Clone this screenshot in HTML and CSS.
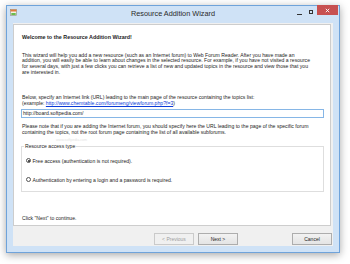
FILE: index.html
```html
<!DOCTYPE html>
<html>
<head>
<meta charset="utf-8">
<link rel="stylesheet" href="styles.css">
</head>
<body>
<div class="window">
  <div class="titlebar">
    <div class="tb-left">
      <svg class="app-icon" width="7" height="7" viewBox="0 0 7 7">
        <rect x="0.5" y="0.5" width="6" height="6" fill="#f4f1e6" stroke="#8a8a7a" stroke-width="0.6"/>
        <rect x="0.5" y="0.5" width="6" height="2" fill="#e07b3c"/>
        <rect x="1.3" y="4" width="4.4" height="2" fill="#6dbb4a"/>
      </svg>
    </div>
    <div class="title">Resource Addition Wizard</div>
    <div class="controls">
      <span class="ctl min"></span>
      <span class="ctl max"></span>
      <span class="ctl close">
        <svg width="5" height="5" viewBox="0 0 5 5"><path d="M0.8 0.8 L4.2 4.2 M4.2 0.8 L0.8 4.2" stroke="#fff" stroke-width="0.9"/></svg>
      </span>
    </div>
  </div>
  <div class="client">
    <div class="panel">
      <div class="welcome">Welcome to the Resource Addition Wizard!</div>
      <p class="para p1">This wizard will help you add a new resource (such as an Internet forum) to Web Forum Reader.  After you have made an<br>addition, you will easily be able to learn about changes in the selected resource. For example, if you have not visited a resource<br>for several days, with just a few clicks you can retrieve a list of new and updated topics in the resource and view those that you<br>are interested in.</p>
      <p class="para p2">Below, specify an Internet link (URL) leading to the main page of the resource containing the topics list:<br>(example: <a class="link" href="#">http://www.chemtable.com/forumeng/viewforum.php?f=3</a>)</p>
      <div class="input">http://board.softpedia.com/</div>
      <p class="para p3">Please note that if you are adding the Internet forum, you should specify here the URL leading to the page of the specific forum<br>containing the topics, not the root forum page containing the list of all available subforums.</p>
      <fieldset class="group">
        <legend class="legend">Resource access type</legend>
        <div class="radio-row r1"><span class="radio checked"></span>Free access (authentication is not required).</div>
        <div class="radio-row r2"><span class="radio"></span>Authentication by entering a login and a password is required.</div>
      </fieldset>
      <div class="hint">Click "Next" to continue.</div>
      <div class="watermark">www.softpedia.com</div>
    </div>
    <div class="buttons">
      <div class="btn disabled">&lt; Previous</div>
      <div class="btn">Next &gt;</div>
      <div class="btn cancel">Cancel</div>
    </div>
  </div>
</div>
</body>
</html>
```
FILE: styles.css
```css
html, body {
  margin: 0;
  padding: 0;
  background: #ffffff;
}
body {
  width: 350px;
  height: 264px;
  overflow: hidden;
  font-family: "Liberation Sans", Arial, sans-serif;
  color: #1c1c1c;
}
.window {
  margin: 5px 0 0 6px;
  width: 334px;
  height: 248px;
  box-sizing: border-box;
  border: 1px solid #6fa3da;
  background: #cfe2f6;
  box-shadow: 0 2px 8px rgba(0, 0, 0, 0.35);
  display: flex;
  flex-direction: column;
}
.titlebar {
  height: 17px;
  display: grid;
  grid-template-columns: 1fr auto 1fr;
  align-items: start;
}
.tb-left {
  padding: 3px 0 0 3px;
}
.app-icon {
  display: block;
}
.title {
  font-size: 7.3px;
  line-height: 9px;
  padding-top: 3px;
  color: #2a2a2a;
}
.controls {
  display: flex;
  justify-content: flex-end;
  align-items: flex-start;
  padding-right: 1px;
}
.ctl {
  display: block;
  box-sizing: border-box;
}
.min {
  width: 5px;
  height: 1px;
  background: #333;
  margin: 8px 7px 0 0;
}
.max {
  width: 4px;
  height: 4px;
  border: 1px solid #333;
  border-top-width: 1.5px;
  margin: 4px 4px 0 0;
}
.close {
  width: 21px;
  height: 10px;
  background: #c75050;
  display: flex;
  align-items: center;
  justify-content: center;
  margin-top: -1px;
}
.close svg {
  display: block;
}
.client {
  flex: 1;
  margin: 0 6px 6px 6px;
  background: #f0f0f0;
  display: flex;
  flex-direction: column;
}
.panel {
  position: relative;
  height: 202px;
  box-sizing: border-box;
  margin: 1px 2px 0 0;
  background: #fff;
  border: 1px solid #cdcdcd;
  padding: 9px 6px 3px 7px;
  display: flex;
  flex-direction: column;
  font-size: 5.12px;
  line-height: 5.8px;
}
.welcome {
  font-weight: bold;
  font-size: 5.4px;
  line-height: 6px;
  padding-left: 1px;
}
.para {
  margin: 0;
  padding-left: 1px;
  white-space: nowrap;
}
.p1 { margin-top: 12.6px; }
.p2 { margin-top: 19.3px; }
.p3 { margin-top: 6.1px; }
.link {
  color: #0b3bd8;
  text-decoration: underline;
}
.input {
  margin-top: 2.3px;
  height: 9px;
  box-sizing: border-box;
  border: 1px solid #86b6e6;
  padding: 0 0 0 1px;
  line-height: 7px;
}
.group {
  margin: 8.4px 0 0 0;
  padding: 0 2px 8px 2px;
  border: 1px solid #dedede;
  min-width: 0;
}
.legend {
  padding: 0 1px;
  line-height: 5.8px;
}
.radio-row {
  display: flex;
  align-items: center;
  line-height: 6px;
  padding-left: 2px;
}
.r1 { margin-top: 8px; }
.r2 { margin-top: 13px; }
.radio {
  width: 5px;
  height: 5px;
  box-sizing: border-box;
  border: 0.8px solid #555;
  border-radius: 50%;
  margin-right: 1.5px;
  background: #fff;
  position: relative;
}
.radio.checked::after {
  content: "";
  position: absolute;
  left: 0.8px;
  top: 0.8px;
  width: 1.8px;
  height: 1.8px;
  border-radius: 50%;
  background: #222;
}
.hint {
  margin-top: auto;
  padding-left: 1px;
}
.watermark {
  position: absolute;
  left: 42px;
  top: 113px;
  font-size: 3.6px;
  line-height: 4px;
  color: #e4e4e4;
}
.buttons {
  margin-top: 7px;
  display: flex;
  justify-content: flex-end;
  gap: 4px;
  padding-right: 1px;
}
.btn {
  width: 40px;
  height: 12px;
  box-sizing: border-box;
  border: 1px solid #adadad;
  background: linear-gradient(#f2f2f2, #e4e4e4);
  font-size: 5px;
  line-height: 10px;
  text-align: center;
  color: #1c1c1c;
}
.btn.disabled {
  color: #9d9d9d;
  border-color: #cacaca;
  background: #f0f0f0;
}
.btn.cancel {
  margin-left: 50px;
}
```
